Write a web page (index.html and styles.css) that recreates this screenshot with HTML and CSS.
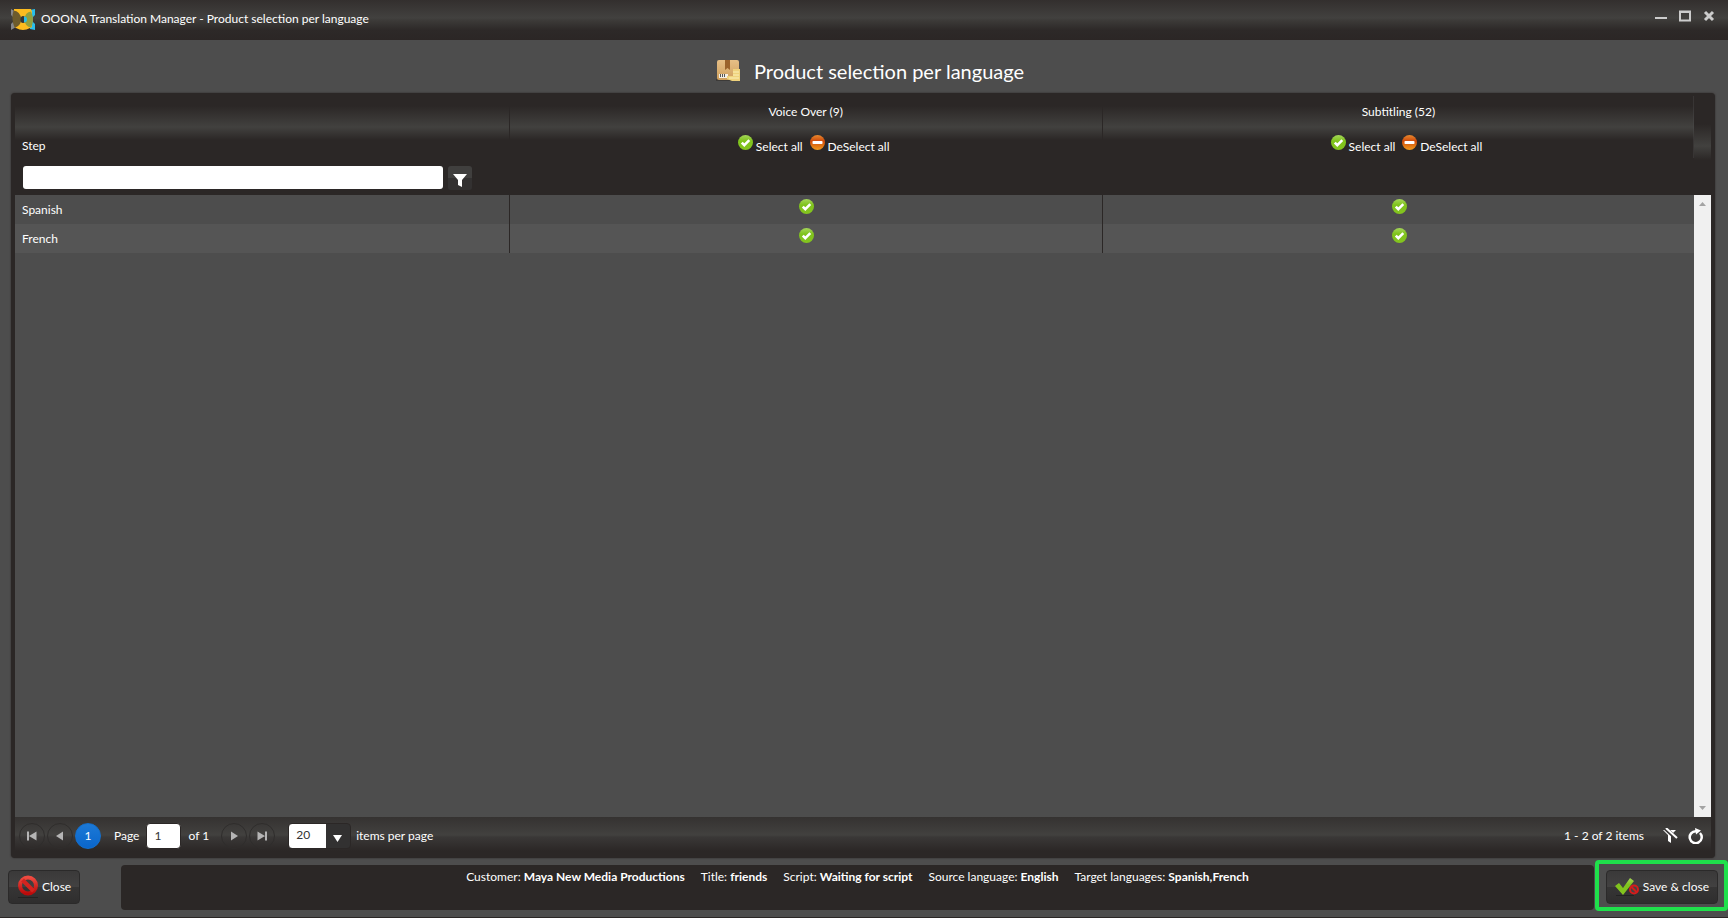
FILE: index.html
```html
<!DOCTYPE html>
<html lang="en">
<head>
    <meta charset="UTF-8">
    <meta name="viewport" content="width=device-width, initial-scale=1.0">
    <title>OOONA Translation Manager - Product selection per language</title>
    <link rel="stylesheet" href="styles.css">
</head>
<body>

    <!-- shared icons -->
    <svg class="sprite" aria-hidden="true">
        <defs>
            <linearGradient id="green" x1="0" y1="0" x2="0" y2="1">
                <stop offset="0" stop-color="#a5d65a"/>
                <stop offset="0.4" stop-color="#7fc31c"/>
                <stop offset="1" stop-color="#84c41f"/>
            </linearGradient>
            <linearGradient id="orange" x1="0" y1="0" x2="0" y2="1">
                <stop offset="0" stop-color="#e88a30"/>
                <stop offset="0.4" stop-color="#cf4a0a"/>
                <stop offset="1" stop-color="#f09a1c"/>
            </linearGradient>
            <linearGradient id="red" x1="0" y1="0" x2="0" y2="1">
                <stop offset="0" stop-color="#ee4a40"/>
                <stop offset="1" stop-color="#bb0a0a"/>
            </linearGradient>
            <linearGradient id="box" x1="0" y1="0" x2="0" y2="1">
                <stop offset="0" stop-color="#e6bf86"/>
                <stop offset="1" stop-color="#cf9f5c"/>
            </linearGradient>
        </defs>
        <symbol id="check" viewBox="0 0 15 15">
            <circle cx="7.5" cy="7.5" r="7.5" fill="url(#green)"/>
            <path d="M3.8 7.6l2.5 2.6 5-5" fill="none" stroke="#fff" stroke-width="2.6"/>
        </symbol>
        <symbol id="minus" viewBox="0 0 15 15">
            <circle cx="7.5" cy="7.5" r="7.5" fill="url(#orange)"/>
            <rect x="2.5" y="6" width="10" height="3" rx="0.8" fill="#fff"/>
        </symbol>
    </svg>

    <header class="titlebar">
        <svg class="logo" width="24" height="21" viewBox="0 0 24 21">
            <path d="M0 0l5 3v15l-5 3v-6l2-2V8L0 6z" fill="#85868a"/>
            <path d="M24 0l-5 1v19l5 1v-6l-2-2V8l2-2z" fill="#29bfec"/>
            <path d="M3 0h17l1 3v15l-2 1q-7 4-14 0l-2-2V4z" fill="#fdbc1f"/>
            <path d="M2.500 1.500Q9 2 10.500 10.500Q9 18 3.500 18.500Q0 10 2.500 1.500z" fill="#6d5b2c"/>
            <path d="M20 2.500Q14 3 13.500 10.500Q14 18 20 18.500Q24 10.500 20 2.500z" fill="#93a03e"/>
            <ellipse cx="12" cy="10.500" rx="2.500" ry="3.500" fill="#373433"/>
            <path d="M13 7.500a3 3 0 0 1 0 6z" fill="#29bfec"/>
        </svg>
        <span class="window-title">OOONA Translation Manager - Product selection per language</span>
        <div class="window-buttons">
            <button aria-label="Minimize"><svg width="12" height="12"><path d="M0 7h12v2H0z" fill="#ccc"/></svg></button>
            <button aria-label="Maximize"><svg width="12" height="12"><path d="M1 1.500h10v9H1z M0 2h12" fill="none" stroke="#ccc" stroke-width="2"/></svg></button>
            <button aria-label="Close window"><svg width="12" height="12"><path d="M2 2l8 8M10 2l-8 8" fill="none" stroke="#ccc" stroke-width="3"/></svg></button>
        </div>
    </header>

    <main class="content">
        <h1 class="heading">
            <svg width="24" height="22" viewBox="0 0 24 22">
                <rect x="0" y="19" width="23" height="2" fill="#3c3a38"/>
                <rect x="1" y="0" width="22" height="20" rx="2" fill="url(#box)"/>
                <path d="M9 0h5v10l-2.500-2L9 10z" fill="#9b632b"/>
                <rect x="3" y="14" width="9" height="4" fill="#f5efe4"/>
                <path d="M4.500 14v3M6.500 14v3M8.500 14v3" stroke="#555"/>
                <path d="M11 16h6V9h7v12h-8l-5-2z" fill="#efd27c"/>
                <path d="M17 12h6M17 15h6M13 18h10" stroke="#fbf0b8"/>
            </svg>
            Product selection per language
        </h1>

        <section class="grid">
            <div class="grid-view">
                <table class="grid-table">
                    <colgroup>
                        <col class="col-step">
                        <col>
                        <col>
                    </colgroup>
                    <thead>
                        <tr class="titles">
                            <th class="step">Step</th>
                            <th>
                                <div class="product">Voice Over (9)</div>
                                <div class="actions">
                                    <button><svg width="15" height="15"><use href="#check"/></svg>Select all</button>
                                    <button><svg width="15" height="15"><use href="#minus"/></svg>DeSelect all</button>
                                </div>
                            </th>
                            <th>
                                <div class="product">Subtitling (52)</div>
                                <div class="actions">
                                    <button><svg width="15" height="15"><use href="#check"/></svg>Select all</button>
                                    <button><svg width="15" height="15"><use href="#minus"/></svg>DeSelect all</button>
                                </div>
                            </th>
                        </tr>
                        <tr class="filters">
                            <td>
                                <div class="filter">
                                    <input type="text" aria-label="Filter by step">
                                    <button aria-label="Filter"><svg width="14" height="14"><path d="M0 1h14L9 7v7l-4-2V7z" fill="#fff"/></svg></button>
                                </div>
                            </td>
                            <td></td>
                            <td></td>
                        </tr>
                    </thead>
                    <tbody>
                        <tr>
                            <td>Spanish</td>
                            <td><button class="mark" aria-label="Voice Over, Spanish"><svg width="15" height="15"><use href="#check"/></svg></button></td>
                            <td><button class="mark" aria-label="Subtitling, Spanish"><svg width="15" height="15"><use href="#check"/></svg></button></td>
                        </tr>
                        <tr>
                            <td>French</td>
                            <td><button class="mark" aria-label="Voice Over, French"><svg width="15" height="15"><use href="#check"/></svg></button></td>
                            <td><button class="mark" aria-label="Subtitling, French"><svg width="15" height="15"><use href="#check"/></svg></button></td>
                        </tr>
                    </tbody>
                </table>
                <div class="scroll">
                    <div class="scroll-head"></div>
                    <div class="scroll-track">
                        <svg width="7" height="4"><path d="M0 4l3.500-4L7 4z" fill="#a3a3a3"/></svg>
                        <svg width="7" height="4"><path d="M0 0l3.500 4L7 0z" fill="#a3a3a3"/></svg>
                    </div>
                </div>
            </div>

            <nav class="pager">
                <button class="page-nav" aria-label="First page"><svg width="10" height="10"><path d="M0 0.500h2v9H0zM9.500 0.500v9L2 5z" fill="#b5b5b5"/></svg></button>
                <button class="page-nav" aria-label="Previous page"><svg width="10" height="10"><path d="M8 0.500v9L1 5z" fill="#b5b5b5"/></svg></button>
                <button class="page-nav current">1</button>
                <label class="page-field">Page <input type="text" value="1"> of 1</label>
                <button class="page-nav" aria-label="Next page"><svg width="10" height="10"><path d="M2 0.500v9L9 5z" fill="#b5b5b5"/></svg></button>
                <button class="page-nav" aria-label="Last page"><svg width="10" height="10"><path d="M8 0.500h2v9H8zM0.500 0.500v9L8 5z" fill="#b5b5b5"/></svg></button>
                <label class="size-field">
                    <span class="size-select">
                        <select>
                            <option>10</option>
                            <option selected>20</option>
                            <option>50</option>
                        </select>
                        <svg width="9" height="7"><path d="M0 0h9L4.500 7z" fill="#fff"/></svg>
                    </span>
                    items per page
                </label>
                <span class="total">1 - 2 of 2 items</span>
                <button class="tool" aria-label="Clear filters"><svg width="16" height="16"><path d="M1 2h13L9 7v8l-3-2V7z" fill="#fff"/><path d="M3 0l12 11" stroke="#3d3b3a" stroke-width="4"/><path d="M4 0l11 10" stroke="#fff" stroke-width="2"/></svg></button>
                <button class="tool" aria-label="Refresh"><svg width="16" height="16"><path d="M9 3.200A6 6 0 1 0 13 5" fill="none" stroke="#fff" stroke-width="2.500"/><path d="M8 0l6 2.500-5 4z" fill="#fff"/></svg></button>
            </nav>
        </section>
    </main>

    <footer class="footer">
        <button class="action">
            <svg width="22" height="24" viewBox="0 0 22 24">
                <path d="M1 22h20v1H1z" fill="#222"/>
                <circle cx="11" cy="10.500" r="8" fill="none" stroke="url(#red)" stroke-width="4"/>
                <path d="M5.500 5l11 11" stroke="#d3241f" stroke-width="4"/>
            </svg>
            Close
        </button>
        <div class="info">
            <span>Customer: <b>Maya New Media Productions</b></span>
            <span>Title: <b>friends</b></span>
            <span>Script: <b>Waiting for script</b></span>
            <span>Source language: <b>English</b></span>
            <span>Target languages: <b>Spanish,French</b></span>
        </div>
        <div class="highlight">
            <button class="action">
                <svg width="25" height="20" viewBox="0 0 25 20">
                    <path d="M1 18h18v1H1z" fill="#222"/>
                    <path d="M0 9l4-3 4 5 7-10 4 3L8 18z" fill="url(#green)"/>
                    <circle cx="19" cy="12.500" r="4" fill="#444" stroke="#d51c1c" stroke-width="2"/>
                    <path d="M16 9.500l6 6" stroke="#d51c1c" stroke-width="2"/>
                </svg>
                Save &amp; close
            </button>
        </div>
    </footer>

</body>
</html>
```

FILE: styles.css
```css
* {
    margin: 0;
    padding: 0;
    box-sizing: border-box;
}

body {
    font-family: Lato, "Open Sans", sans-serif;
    font-size: 12px;
    line-height: 16px;
    color: #fff;
    background-color: #4d4d4d;
    min-height: 100vh;
    display: flex;
    flex-direction: column;
    border-bottom: 1px solid #2b2726;
}

button,
input,
select {
    font: inherit;
    color: inherit;
    border: none;
    background: none;
}

button {
    cursor: pointer;
}

svg {
    display: block;
    flex: none;
}

.sprite {
    position: absolute;
    width: 0;
    height: 0;
}

/* Window title bar */
.titlebar {
    display: flex;
    align-items: center;
    gap: 6px;
    height: 40px;
    padding: 0 13px 2px 11px;
    background: linear-gradient(#332f2e, #42413f 18px, #3d3b39 20px, #2d2928 30px, #2b2625);
}

.window-title {
    flex: 1;
}

.window-buttons {
    display: flex;
    gap: 12px;
    padding-bottom: 6px;
}

/* Main area */
.content {
    flex: 1;
    display: flex;
    flex-direction: column;
    padding: 0 13px 0 11px;
}

.heading {
    display: flex;
    justify-content: center;
    align-items: center;
    gap: 14px;
    height: 53px;
    padding: 12px 0 4px 14px;
    font-size: 20px;
    font-weight: normal;
}

.grid {
    flex: 1;
    display: flex;
    flex-direction: column;
    padding: 3px 4px;
    background-color: #2b2726;
    border-radius: 4px;
    box-shadow: 0 0 2px #2b2726;
}

.grid-view {
    flex: 1;
    display: flex;
    align-items: flex-start;
    background-color: #4d4d4d;
}

.grid-table {
    flex: 1;
    table-layout: fixed;
    border-collapse: collapse;
}

.col-step {
    width: 494px;
}

.grid-table th,
.grid-table td {
    font-weight: normal;
    text-align: center;
    border-left: 1px solid #2b2726;
}

.grid-table th:first-child,
.grid-table td:first-child {
    text-align: left;
    padding-left: 7px;
    border-left: none;
}

.titles {
    height: 62px;
    background: linear-gradient(#2b2726 10px, #42413f 31px, #2b2726 44px);
}

.titles th {
    vertical-align: top;
    padding-top: 8px;
}

.titles .step {
    vertical-align: bottom;
    padding-bottom: 4px;
}

.actions {
    display: flex;
    justify-content: center;
    gap: 7px;
    padding: 15px 0 0 16px;
}

.actions button {
    display: flex;
    gap: 3px;
    line-height: 23px;
}

.filters {
    height: 37px;
    background-color: #2b2726;
}

.filter {
    display: flex;
    gap: 5px;
    padding: 2px 37px 0 1px;
}

.filter input {
    flex: 1;
    height: 23px;
    padding: 0 6px;
    color: #333;
    background-color: #fff;
    border-radius: 3px;
}

.filter button {
    display: flex;
    justify-content: center;
    align-items: center;
    width: 24px;
    height: 24px;
    padding-top: 4px;
    background: linear-gradient(#403f3e 50%, #333131 50%);
    border-radius: 3px;
}

.grid-table tbody tr {
    height: 29px;
}

.grid-table tbody tr:nth-child(even) {
    background-color: #555;
}

.mark {
    display: block;
    margin: 0 auto;
    padding: 0 0 6px 2px;
}

/* Always visible scrollbar */
.scroll {
    align-self: stretch;
    display: flex;
    flex-direction: column;
    width: 17px;
}

.scroll-head {
    height: 99px;
    background: linear-gradient(#2b2726 28px, #42413f 50px, #2b2726 64px);
}

.scroll-track {
    flex: 1;
    display: flex;
    flex-direction: column;
    justify-content: space-between;
    align-items: center;
    padding: 7px 0;
    background-color: #f0f0f0;
}

/* Pager */
.pager {
    display: flex;
    align-items: center;
    gap: 2px;
    height: 38px;
    padding: 0 8px 0 4px;
    background: linear-gradient(#353231, #42413f 18px, #3a3837 20px, #2b2726 34px);
}

.page-nav {
    display: flex;
    justify-content: center;
    align-items: center;
    width: 26px;
    height: 26px;
    border: 1px solid #2f2d2c;
    border-radius: 50%;
}

.page-nav.current {
    background: linear-gradient(#1c79d6, #0a66cc);
    border-color: #1270d0;
}

.page-field {
    display: flex;
    align-items: center;
    gap: 7px;
    padding: 0 10px 0 11px;
}

.page-field input {
    width: 35px;
    height: 26px;
    padding: 0 7px 2px;
    color: #333;
    background-color: #fff;
    border: 1px solid #2b2726;
    border-radius: 4px;
}

.size-field {
    display: flex;
    align-items: center;
    gap: 5px;
    padding-left: 11px;
}

.size-select {
    position: relative;
}

.size-select select {
    appearance: none;
    display: block;
    width: 63px;
    height: 26px;
    padding: 0 7px 2px;
    color: #333;
    background: linear-gradient(90deg, #fff 37px, #323131 37px);
    border: 1px solid #2b2726;
    border-radius: 4px;
}

/* arrow lies over the select */
.size-select svg {
    position: absolute;
    right: 9px;
    bottom: 7px;
    pointer-events: none;
}

.total {
    margin-left: auto;
    margin-right: 16px;
}

.tool + .tool {
    margin-left: 7px;
}

/* Footer */
.footer {
    display: flex;
    align-items: flex-end;
    padding: 2px 0 6px 8px;
}

.action {
    display: flex;
    justify-content: center;
    align-items: center;
    gap: 3px;
    height: 34px;
    padding: 0 8px;
    background: linear-gradient(#3a3939, #424141 50%, #363535 50%, #2f2e2e);
    border: 1px solid #2b2a2a;
    border-radius: 4px;
    white-space: nowrap;
}

.footer > .action {
    margin-bottom: 7px;
}

.info {
    flex: 1;
    display: flex;
    justify-content: center;
    flex-wrap: wrap;
    gap: 0 16px;
    min-height: 45px;
    margin: 0 1px 1px 41px;
    padding-top: 4px;
    background-color: #2b2726;
    border-radius: 4px;
}

.highlight {
    padding: 6px 6px 3px 7px;
    border: 4px solid #1fe04b;
    border-radius: 4px;
}
```
